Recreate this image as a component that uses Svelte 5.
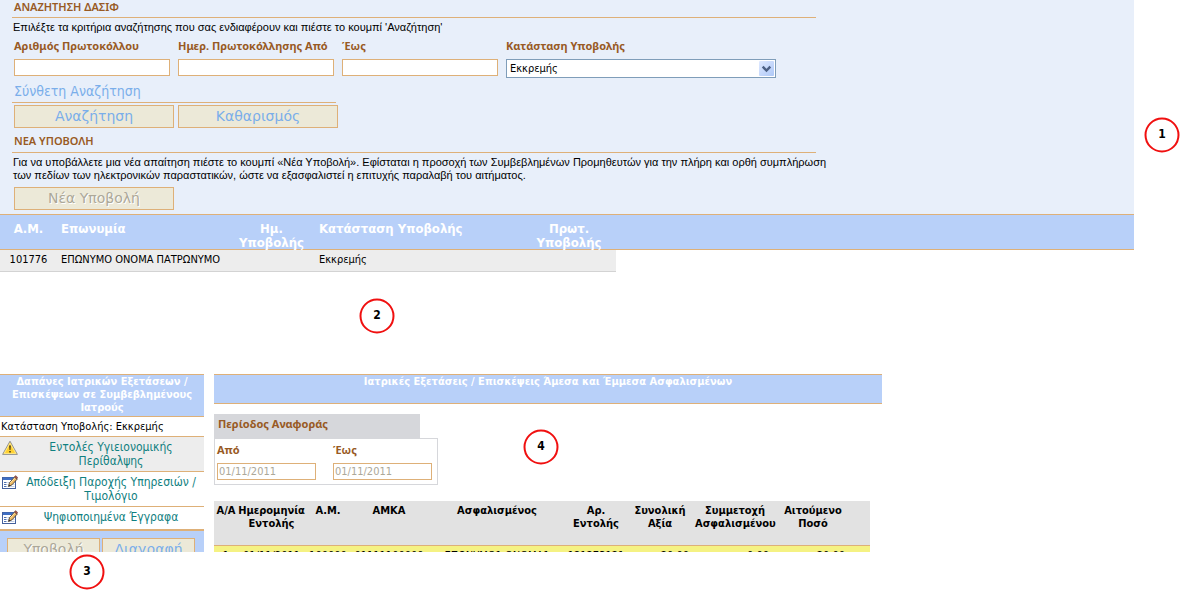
<script>
  const fields = [
    { id: 'protocol', label: 'Αριθμός Πρωτοκόλλου' },
    { id: 'from', label: 'Ημερ. Πρωτοκόλλησης Από' },
    { id: 'to', label: 'Έως' }
  ];
  const tasks = [
    { icon: 'warn', text: 'Εντολές Υγιειονομικής Περίθαλψης' },
    { icon: 'edit', text: 'Απόδειξη Παροχής Υπηρεσιών / Τιμολόγιο' },
    { icon: 'edit', text: 'Ψηφιοποιημένα Έγγραφα' }
  ];
  const marks = [
    { n: 1, x: 1162, y: 135 },
    { n: 2, x: 377, y: 316 },
    { n: 3, x: 87, y: 572 },
    { n: 4, x: 541, y: 447 }
  ];
</script>

<main>
  <section class="search">
    <h2>ΑΝΑΖΗΤΗΣΗ ΔΑΣΙΦ</h2>
    <p>Επιλέξτε τα κριτήρια αναζήτησης που σας ενδιαφέρουν και πιέστε το κουμπί 'Αναζήτηση'</p>
    <form class="criteria">
      {#each fields as f}
        <div class="field">
          <label for={f.id}>{f.label}</label>
          <input id={f.id} type="text" />
        </div>
      {/each}
      <div class="field wide">
        <label for="status">Κατάσταση Υποβολής</label>
        <div class="pick">
          <select id="status"><option>Εκκρεμής</option></select>
          <svg viewBox="0 0 15 15" aria-hidden="true">
            <defs>
              <linearGradient id="knob" x1="0" y1="0" x2="1" y2="1">
                <stop offset="0" stop-color="#dfe9ff" /><stop offset="1" stop-color="#aec8f7" />
              </linearGradient>
            </defs>
            <rect width="15" height="15" rx="1" fill="url(#knob)" />
            <path d="M3.7 5.7l3.8 3.8 3.8-3.8" fill="none" stroke="#4d6185" stroke-width="2.4" />
          </svg>
        </div>
      </div>
    </form>
    <a class="advanced" href="#advanced">Σύνθετη Αναζήτηση</a>
    <div class="actions">
      <button>Αναζήτηση</button>
      <button>Καθαρισμός</button>
    </div>
    <h2>ΝΕΑ ΥΠΟΒΟΛΗ</h2>
    <p class="long">Για να υποβάλλετε μια νέα απαίτηση πιέστε το κουμπί «Νέα Υποβολή». Εφίσταται η προσοχή των Συμβεβλημένων Προμηθευτών για την πλήρη και ορθή συμπλήρωση<br />των πεδίων των ηλεκτρονικών παραστατικών, ώστε να εξασφαλιστεί η επιτυχής παραλαβή του αιτήματος.</p>
    <div class="actions">
      <button disabled>Νέα Υποβολή</button>
    </div>
  </section>

  <div class="results">
    <table>
      <colgroup><col class="r1" /><col class="r2" /><col class="r3" /><col class="r4" /><col class="r5" /></colgroup>
      <thead>
        <tr><th>Α.Μ.</th><th class="l">Επωνυμία</th><th>Ημ.<br />Υποβολής</th><th class="l">Κατάσταση Υποβολής</th><th>Πρωτ.<br />Υποβολής</th></tr>
      </thead>
      <tbody>
        <tr><td class="c">101776</td><td>ΕΠΩΝΥΜΟ ΟΝΟΜΑ ΠΑΤΡΩΝΥΜΟ</td><td></td><td>Εκκρεμής</td><td></td></tr>
      </tbody>
    </table>
  </div>

  <div class="detail">
    <aside>
      <h3>Δαπάνες Ιατρικών Εξετάσεων / Επισκέψεων σε Συμβεβλημένους Ιατρούς</h3>
      <div class="state">Κατάσταση Υποβολής: Εκκρεμής</div>
      {#each tasks as t}
        <div class="task" class:on={t.icon === 'warn'}>
          {#if t.icon === 'warn'}
            <svg viewBox="0 0 16 16" aria-hidden="true">
              <path d="M8 1.2L15.4 14.4H.6z" fill="#ffd02e" stroke="#8f9298" stroke-linejoin="round" />
              <path d="M8 3.2L13.8 13.4H2.2z" fill="none" stroke="#fff0a0" stroke-width=".8" />
              <path d="M7.1 5.5h1.8l-.4 4.5h-1zM7.2 11h1.6v1.6H7.2z" fill="#4a3c18" />
            </svg>
          {:else}
            <svg viewBox="0 0 16 16" aria-hidden="true">
              <rect x=".5" y="2.5" width="13" height="11" fill="#fff" stroke="#44609c" />
              <rect x="1" y="2.5" width="12" height="2.5" fill="#3f6fc4" />
              <path d="M2 7.5h2.5M2 9.5h2.5M2 11.5h2.5" stroke="#4c6fae" />
              <path d="M5.5 7.5h7M5.5 9.5h7M5.5 11.5h7" stroke="#c2cfe4" />
              <path d="M6.6 11.4l.9-3.7 5.2-5.7 2.5 2.1-5.2 5.7z" fill="#f0bd66" stroke="#4f4030" stroke-width=".9" />
              <path d="M8.3 7.9l5-5.6" stroke="#fde7b0" />
              <path d="M12.4 2l1.2-1.4 2.2 2-1 1.4z" fill="#a55448" stroke="#5b3c3a" stroke-width=".5" />
              <path d="M6.5 11.6l.5-1.9 1.3 1.1z" fill="#222" />
            </svg>
          {/if}
          <a href="#task">{t.text}</a>
        </div>
      {/each}
      <div class="foot">
        <button disabled>Υποβολή</button>
        <button>Διαγραφή</button>
      </div>
    </aside>

    <section class="exams">
      <h3>Ιατρικές Εξετάσεις / Επισκέψεις Άμεσα και Έμμεσα Ασφαλισμένων</h3>
      <h4>Περίοδος Αναφοράς</h4>
      <div class="period">
        <div><label for="p1">Από</label><input id="p1" type="text" value="01/11/2011" disabled /></div>
        <div><label for="p2">Έως</label><input id="p2" type="text" value="01/11/2011" disabled /></div>
      </div>
      <div class="orders">
        <table>
          <colgroup><col class="o1" /><col class="o2" /><col class="o3" /><col class="o4" /><col class="o5" /><col class="o6" /><col class="o7" /><col class="o8" /><col class="o9" /><col /></colgroup>
          <thead>
            <tr><th>Α/Α</th><th>Ημερομηνία Εντολής</th><th>Α.Μ.</th><th>ΑΜΚΑ</th><th>Ασφαλισμένος</th><th>Αρ. Εντολής</th><th>Συνολική Αξία</th><th>Συμμετοχή Ασφαλισμένου</th><th>Αιτούμενο Ποσό</th><th></th></tr>
          </thead>
          <tbody>
            <tr><td>1</td><td>01/11/2011</td><td>100000</td><td>01111100000</td><td>ΕΠΩΝΥΜΟ1 ΟΝΟΜΑ1</td><td>121273121</td><td class="r">20.00</td><td class="r">0.00</td><td class="r">20.00</td><td></td></tr>
          </tbody>
        </table>
      </div>
    </section>
  </div>

  {#each marks as m}
    <span class="mark" style="left:{m.x}px;top:{m.y}px">{m.n}</span>
  {/each}
</main>

<style>
  :global(body) { margin: 0; background: #fff; }
  main {
    position: relative;
    padding-bottom: 39px;
    font: 11px/13px "DejaVu Sans Condensed", "DejaVu Sans", sans-serif;
    color: #000;
  }
  h2, h3, h4, p { margin: 0; }
  button, input, select { font-family: inherit; box-sizing: border-box; margin: 0; border-radius: 0; }
  a { text-decoration: none; }
  .search, .results { margin-right: 52px; }
  .search { background: #e8effa; padding: 0 12px 4px; }
  h2 {
    max-width: 800px;
    padding: 0 2px 4px;
    border-bottom: 1px solid #deb078;
    font: 600 11px/13px "Noto Sans", sans-serif;
    color: #985a24;
  }
  .search > p { padding: 3px 1px 0; font: 11px/13px "Liberation Sans", sans-serif; white-space: nowrap; }
  .criteria { display: flex; gap: 8px; padding: 5px 2px 0; }
  .field { width: 156px; }
  .field.wide { width: 270px; }
  label, h4 { display: block; font: bold 11px/14px "Noto Sans", sans-serif; color: #985a24; }
  label { white-space: nowrap; }
  input { display: block; width: 100%; height: 17px; padding: 0 1px; border: 1px solid #deb078; background: #fff; font-size: 11px; }
  .field input, .pick { margin-top: 6px; }
  .pick { display: grid; height: 19px; }
  .pick > * { grid-area: 1 / 1; }
  select { appearance: none; width: 100%; height: 19px; padding: 0 3px; border: 1px solid #7f9db9; background: #fff; font-size: 11px; color: #000; }
  .pick svg { width: 15px; height: 15px; justify-self: end; align-self: center; margin-right: 2px; pointer-events: none; }
  .advanced { display: block; width: 322px; padding: 5px 0 2px 2px; border-bottom: 1px solid #deb078; font: 14px/17px "DejaVu Sans Condensed", sans-serif; color: #7aaeea; }
  .actions { display: flex; gap: 4px; padding: 2px 2px 0; margin-bottom: 6px; }
  button { width: 160px; height: 23px; padding: 0; border: 1px solid #deb078; background: #ece9d8; font: 14px/19px "DejaVu Sans", sans-serif; color: #7aaeea; }
  button:disabled { color: #aca899; text-shadow: 1px 1px #fff; }
  h2:not(:first-child) { padding-bottom: 5px; }
  .long + .actions { padding-top: 5px; margin-bottom: 0; }

  table { border-collapse: collapse; table-layout: fixed; }
  th, td { padding: 0; vertical-align: top; }
  td { text-align: left; }
  .results { height: 34px; border: solid #deb078; border-width: 1px 0; background: #b8d0f9; color: #fff; }
  .results table { width: 616px; }
  .results th { height: 28px; padding-top: 7px; font: bold 13px/14px "DejaVu Sans Condensed", sans-serif; }
  .results .l { text-align: left; }
  .results th:first-child, .results td:first-child { padding-right: 4px; }
  .results td { height: 21px; line-height: 19px; background: #ededed; border-bottom: 1px solid #d3d3d3; color: #000; white-space: nowrap; }
  .results .c { text-align: center; }
  .r1 { width: 61px; } .r2 { width: 163px; } .r3 { width: 95px; } .r4 { width: 203px; } .r5 { width: 94px; }

  .detail { display: flex; gap: 10px; height: 178px; margin-top: 124px; overflow: hidden; }
  aside { width: 204px; }
  h3 { border: solid #deb078; border-width: 1px 0; background: #b8d0f9; color: #fff; text-align: center; font: bold 11px/13px "DejaVu Sans Condensed", sans-serif; }
  aside h3 { height: 41px; }
  .state { padding: 3px 1px; border-bottom: 1px solid #deb078; }
  .task { display: flex; padding: 3px 0; border-bottom: 1px solid #deb078; font: 12px/14px "DejaVu Sans Condensed", sans-serif; }
  .task.on { background: #ededed; }
  .task svg { width: 16px; height: 16px; margin-left: 2px; flex: none; }
  .task a { flex: 1; padding: 0 2px; text-align: center; color: #108080; }
  .foot { display: flex; gap: 2px; padding: 7px; border-top: 1px solid #deb078; background: #b8d0f9; }
  .foot button { width: 93px; }

  .exams { flex: 1; }
  .exams h3 { max-width: 668px; height: 28px; }
  h4 { width: 202px; height: 21px; margin-top: 10px; padding: 3px 0 0 4px; background: #d6d7db; }
  .period { display: flex; gap: 17px; width: 218px; padding: 4px 2px; border: 1px solid #d6d7db; }
  .period > div { width: 99px; }
  .period input { margin-top: 6px; color: #aca899; }
  .orders { margin-top: 16px; max-width: 656px; }
  .orders table { width: 100%; }
  .orders th { height: 41px; padding-top: 3px; background: #e2e2e2; border-bottom: 1px solid #deb078; font: bold 11px/13px "DejaVu Sans Condensed", sans-serif; }
  .orders td { padding-top: 3px; background: #f5f283; text-align: center; white-space: nowrap; }
  .orders .r { text-align: right; padding-right: 6px; }
  .o1 { width: 24px; } .o2 { width: 67px; } .o3 { width: 46px; } .o4 { width: 76px; } .o5 { width: 140px; } .o6 { width: 58px; } .o7 { width: 70px; } .o8 { width: 80px; } .o9 { width: 76px; }

  .mark {
    position: absolute;
    width: 31px; height: 31px;
    transform: translate(-50%, -50%);
    border: 2px solid #f01010;
    border-radius: 50%;
    text-align: center;
    font: bold 12px/29px "DejaVu Sans Condensed", sans-serif;
  }
</style>
